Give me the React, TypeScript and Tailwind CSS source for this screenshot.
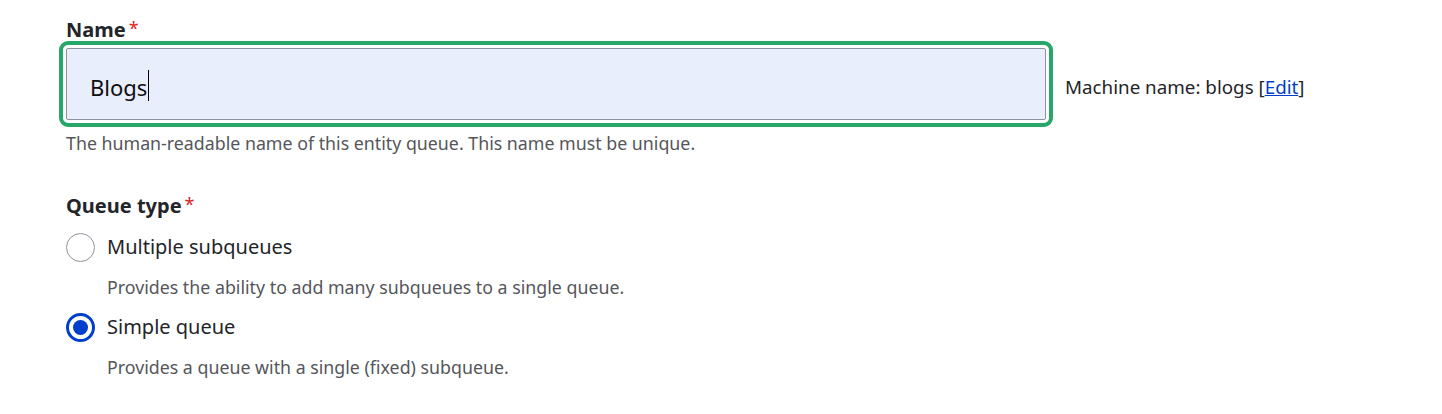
import React from "react";

const font = { fontFamily: '"Noto Sans", "Open Sans", Arial, sans-serif' };

function Radio({ checked }: { checked?: boolean }) {
  if (checked) {
    return (
      <span className="flex h-[29px] w-[29px] shrink-0 items-center justify-center rounded-full border-[3.5px] border-[#003ecc] bg-white">
        <span className="h-[15px] w-[15px] rounded-full bg-[#003ecc]" />
      </span>
    );
  }
  return <span className="h-[29px] w-[29px] shrink-0 rounded-full border border-[#8e929c] bg-white" />;
}

export default function App() {
  return (
    <div className="min-h-[414px] w-full bg-white pl-[66px] pt-[18px] text-[#232429]" style={font}>
      <div className="flex h-[24px] items-center text-[20px] font-bold leading-[24px]">
        Name<span className="ml-[3px] -mt-[4px] text-[18px] font-normal text-[#dc2323]">*</span>
      </div>
      <div className="mt-[6px] flex items-center">
        <div className="flex h-[72px] w-[980px] items-center rounded-[2px] border border-[#8e929c] bg-[#e8eefb] pl-[23px] pt-[6px] text-[22px] leading-[30px] text-[#0f0f10] outline-4 outline-offset-3 outline-[#26a769]">
          <span>Blogs</span>
          <span className="-mt-[4px] ml-px h-[31px] w-px bg-black" />
        </div>
        <div className="ml-[19px] pt-[6px] text-[18.8px] text-[#232429]">
          Machine name: blogs [<a href="#" className="text-[#003ecc] underline">Edit</a>]
        </div>
      </div>
      <div className="mt-[11px] h-[24px] text-[17.8px] leading-[24px] text-[#55565b]">
        The human-readable name of this entity queue. This name must be unique.
      </div>
      <div className="mt-[39px] flex h-[24px] items-center text-[20px] font-bold leading-[24px]">
        Queue type<span className="ml-[3px] -mt-[4px] text-[18px] font-normal text-[#dc2323]">*</span>
      </div>
      <div className="mt-[14px] flex h-[30px] items-center gap-[12px]">
        <Radio />
        <span className="text-[20px]">Multiple subqueues</span>
      </div>
      <div className="ml-[41px] mt-[13px] h-[24px] text-[17.8px] leading-[24px] text-[#55565b]">
        Provides the ability to add many subqueues to a single queue.
      </div>
      <div className="mt-[13px] flex h-[30px] items-center gap-[12px]">
        <Radio checked />
        <span className="text-[20px]">Simple queue</span>
      </div>
      <div className="ml-[41px] mt-[13px] h-[24px] text-[17.8px] leading-[24px] text-[#55565b]">
        Provides a queue with a single (fixed) subqueue.
      </div>
    </div>
  );
}
